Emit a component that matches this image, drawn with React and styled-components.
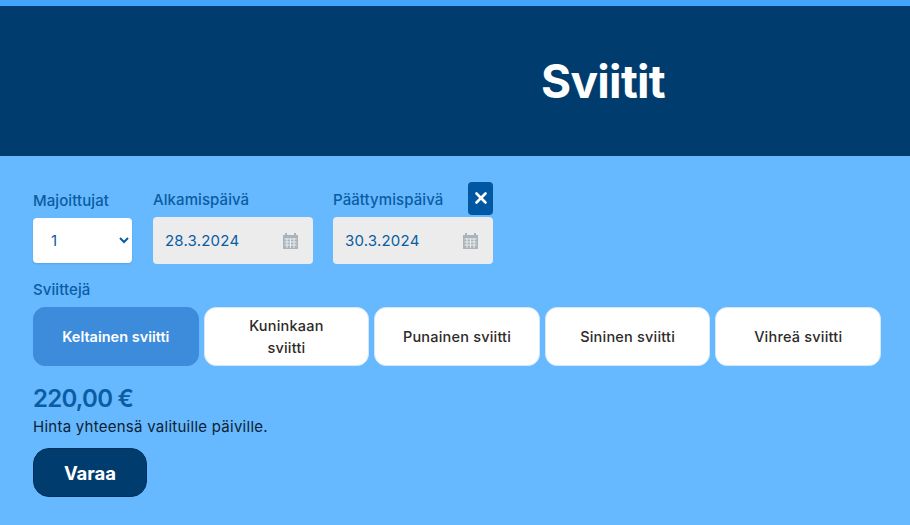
import styled, { createGlobalStyle } from "styled-components";
import { X } from "lucide-react";

const GlobalStyle = createGlobalStyle`
  html, body {
    margin: 0;
    padding: 0;
    background: #66b8ff;
    font-family: "Inter", "Liberation Sans", sans-serif;
  }
`;

const Page = styled.div`
  height: 525px;
  overflow: hidden;
  background: #66b8ff;
`;

const TopStrip = styled.div`
  height: 6px;
  background: #42a5fb;
`;

const Header = styled.header`
  height: 150px;
  background: #003d6e;
  display: flex;
  align-items: center;
  justify-content: center;
`;

const Title = styled.h1`
  margin: 0 0 0 296px;
  color: #fff;
  font-size: 46px;
  font-weight: 700;
  letter-spacing: -0.7px;
  line-height: 1;
`;

const Content = styled.main`
  padding: 34px 29px 0 33px;
`;

const Filters = styled.div`
  display: flex;
  gap: 20px;
  align-items: flex-end;
`;

const Field = styled.div`
  position: relative;
  display: flex;
  flex-direction: column;
  width: ${(p) => p.$width}px;
`;

const Label = styled.label`
  color: #0a5ca3;
  font-size: 15px;
  font-weight: 500;
  letter-spacing: 0.08px;
  line-height: 20px;
  margin-bottom: 7px;
`;

const Select = styled.select`
  width: 99px;
  height: 45px;
  margin-bottom: 1px;
  padding: 0 0 0 14px;
  border: none;
  border-radius: 4px;
  background: #fff;
  color: #0a5ca3;
  font-family: inherit;
  font-size: 15px;
  box-shadow: 0 1px 2px rgba(0, 0, 0, 0.12);
`;

const DateBox = styled.div`
  height: 47px;
  box-sizing: border-box;
  padding: 0 14px 0 12px;
  border-radius: 4px;
  background: #ececec;
  color: #0a5ca3;
  font-size: 15px;
  letter-spacing: 0.2px;
  display: flex;
  align-items: center;
  justify-content: space-between;
`;

const ClearButton = styled.button`
  position: absolute;
  right: 0;
  top: -8px;
  width: 25px;
  height: 33px;
  padding: 0 0 2px;
  border: none;
  border-radius: 4px;
  background: #0058a3;
  color: #fff;
  display: flex;
  align-items: center;
  justify-content: center;
`;

const SuiteLabel = styled(Label)`
  display: block;
  margin: 16px 0 7px;
`;

const SuiteRow = styled.div`
  display: grid;
  grid-template-columns: repeat(5, 1fr);
  gap: 5px;
`;

const SuiteButton = styled.button`
  height: 59px;
  padding: 0 26px;
  border: 1px solid ${(p) => (p.$active ? "#3d8bdb" : "#d5e8fb")};
  border-radius: 12px;
  background: ${(p) => (p.$active ? "#3d8bdb" : "#fff")};
  color: ${(p) => (p.$active ? "#fff" : "#2e2a2a")};
  font-family: inherit;
  font-size: 14.5px;
  font-weight: ${(p) => (p.$active ? 600 : 500)};
  letter-spacing: ${(p) => (p.$active ? 0 : 0.2)}px;
  line-height: 22px;
`;

const Price = styled.div`
  margin-top: 18px;
  color: #0a5ca3;
  font-size: 24px;
  font-weight: 600;
  letter-spacing: -0.75px;
  line-height: 29px;
`;

const Hint = styled.p`
  margin: 4px 0 0;
  color: #0d1f33;
  font-size: 15px;
  letter-spacing: 0.26px;
  line-height: 20px;
`;

const BookButton = styled.button`
  display: block;
  width: 114px;
  height: 49px;
  margin-top: 11px;
  border: 1px solid #00305a;
  border-radius: 16px;
  background: #003d6e;
  color: #fff;
  font-family: inherit;
  font-size: 18.5px;
  font-weight: 700;
`;

const CalendarIcon = () => (
  <svg width="17" height="17" viewBox="0 0 17 17" fill="#aab4bc">
    <path d="M1 3h2V1h2v2h7V1h2v2h2v14H1z" />
    <path
      d="M2.5 7h12M2.5 10h12M2.5 13h12M5 6v10M8.500 6v10M12 6v10"
      stroke="#ececec"
      strokeWidth="1"
      fill="none"
    />
  </svg>
);

const suites = [
  "Keltainen sviitti",
  "Kuninkaan sviitti",
  "Punainen sviitti",
  "Sininen sviitti",
  "Vihreä sviitti",
];

const App = () => {
  return (
    <Page>
      <GlobalStyle />
      <TopStrip />
      <Header>
        <Title>Sviitit</Title>
      </Header>
      <Content>
        <Filters>
          <Field $width={100}>
            <Label>Majoittujat</Label>
            <Select defaultValue="1">
              <option>1</option>
              <option>2</option>
              <option>3</option>
            </Select>
          </Field>
          <Field $width={160}>
            <Label>Alkamispäivä</Label>
            <DateBox>
              28.3.2024
              <CalendarIcon />
            </DateBox>
          </Field>
          <Field $width={160}>
            <Label>Päättymispäivä</Label>
            <ClearButton>
              <X size={18} strokeWidth={3.5} />
            </ClearButton>
            <DateBox>
              30.3.2024
              <CalendarIcon />
            </DateBox>
          </Field>
        </Filters>
        <SuiteLabel>Sviittejä</SuiteLabel>
        <SuiteRow>
          {suites.map((name, i) => (
            <SuiteButton key={name} $active={i === 0}>
              {name}
            </SuiteButton>
          ))}
        </SuiteRow>
        <Price>220,00 €</Price>
        <Hint>Hinta yhteensä valituille päiville.</Hint>
        <BookButton>Varaa</BookButton>
      </Content>
    </Page>
  );
};

export default App;
